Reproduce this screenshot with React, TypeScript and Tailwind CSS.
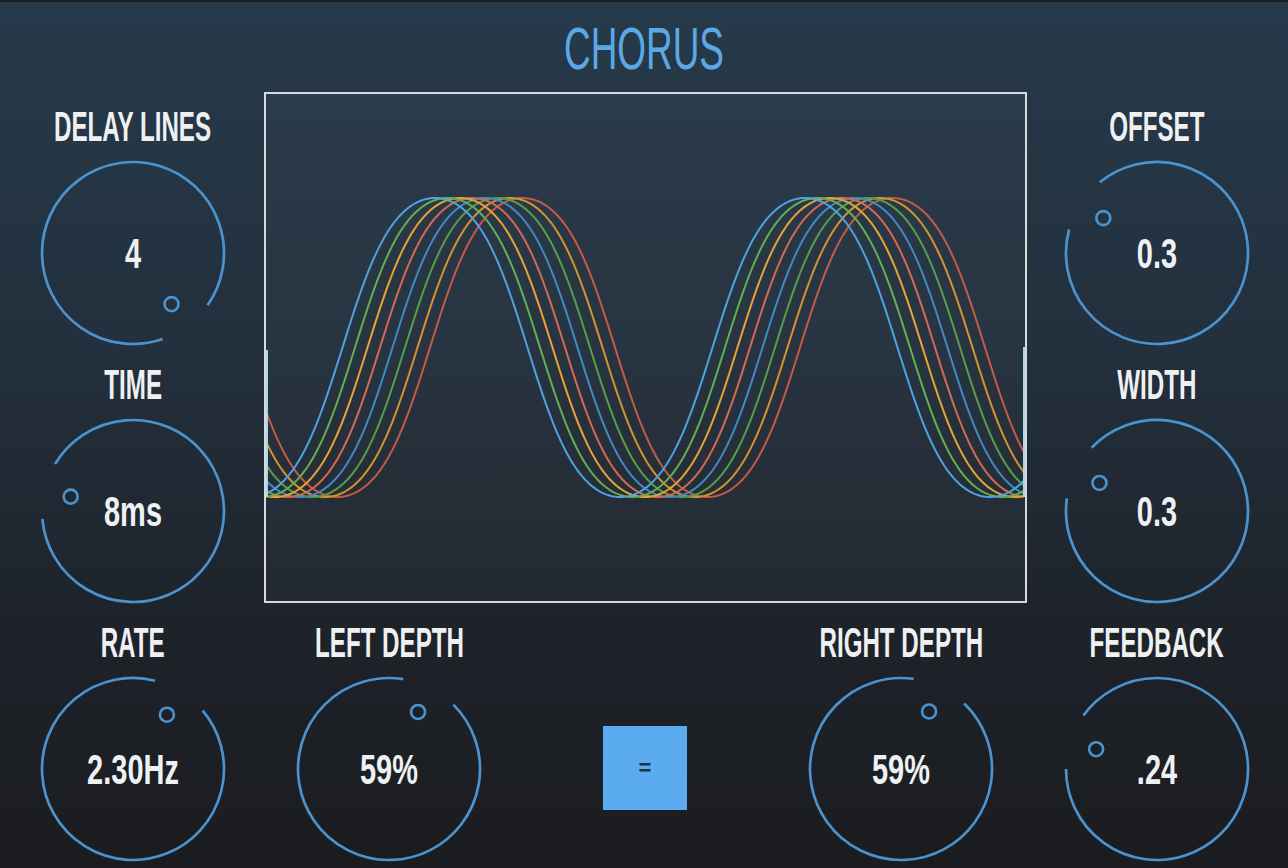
import React from 'react';

const FONT = "font-['Liberation_Sans',Arial,sans-serif]";

const WAVE_COLORS = ['#4da3e0', '#62b054', '#e6a436', '#d46a55', '#3f8ac4', '#54a04a', '#d39430', '#c65a48'];

// angle in degrees, clockwise from 12 o'clock
const pt = (cx: number, cy: number, r: number, a: number) => [
  cx + r * Math.sin((a * Math.PI) / 180),
  cy - r * Math.cos((a * Math.PI) / 180),
];

function arcPath(cx: number, cy: number, r: number, a0: number, a1: number) {
  const [x0, y0] = pt(cx, cy, r, a0);
  const [x1, y1] = pt(cx, cy, r, a1);
  const large = a1 - a0 > 180 ? 1 : 0;
  return `M${x0.toFixed(2)} ${y0.toFixed(2)} A${r} ${r} 0 ${large} 1 ${x1.toFixed(2)} ${y1.toFixed(2)}`;
}

function wavePath(i: number) {
  const W = 759;
  const mid = 253.5;
  const amp = 149.5;
  const k = 0.9;
  const norm = Math.tanh(k);
  const offset = i * 12.5;
  let d = '';
  for (let x = 0; x <= W; x += 2) {
    const px = 266 + x;
    const c = Math.cos((2 * Math.PI * (px - 435 - offset)) / 370);
    const y = mid - (amp * Math.tanh(k * c)) / norm;
    d += `${x === 0 ? 'M' : 'L'}${x} ${y.toFixed(2)} `;
  }
  return d;
}

interface KnobProps {
  label: string;
  value: string;
  angle: number;
  cell: string;
}

const Knob: React.FC<KnobProps> = ({ label, value, angle, cell }) => {
  const gap = 18;
  return (
    <div className={`flex flex-col items-center ${cell}`}>
      <div className="h-[67px] pt-[14px] flex justify-center">
        <span className={`inline-block whitespace-nowrap text-[42px] font-bold leading-none text-[#eef0f2] scale-x-[0.575] ${FONT}`}>
          {label}
        </span>
      </div>
      <svg width="188" height="188" viewBox="0 0 188 188">
        <path d={arcPath(94, 94, 91, angle + gap, angle + 360 - gap)} fill="none" stroke="#4b93cf" strokeWidth="2.7" />
        <circle cx={pt(94, 94, 64, angle)[0]} cy={pt(94, 94, 64, angle)[1]} r="7" fill="none" stroke="#4b93cf" strokeWidth="2.6" />
        <text
          x="0"
          y="15"
          transform="translate(94 94) scale(0.69 1)"
          textAnchor="middle"
          fontSize="42"
          fontWeight="700"
          fill="#eef1f3"
          className={FONT}
        >
          {value}
        </text>
      </svg>
    </div>
  );
};

const Scope: React.FC = () => (
  <div className="col-start-2 col-span-3 row-start-1 row-span-2 ml-[3px] mr-[2px] mb-[5px] border-2 border-[#d6dadd] bg-white/[0.025] overflow-hidden">
    <svg className="block" width="759" height="507" viewBox="0 0 759 507">
      {[7, 6, 5, 4, 3, 2, 1, 0].map((i) => (
        <path key={i} d={wavePath(i)} fill="none" stroke={WAVE_COLORS[i]} strokeWidth="2" />
      ))}
      <line x1="1" y1="256" x2="1" y2="403" stroke="#a6d8e6" strokeWidth="2" />
      <line x1="758" y1="253" x2="758" y2="403" stroke="#a6d8e6" strokeWidth="2" />
    </svg>
  </div>
);

export default function App() {
  return (
    <div className="w-[1288px] h-[868px] overflow-hidden border-t-2 border-[#1a1e22] bg-[linear-gradient(180deg,#263a4b_0%,#23303d_40%,#1e232a_72%,#1b1c1f_100%)]">
      <div className="h-[90px] pt-[17px] flex justify-center">
        <span className={`inline-block text-[60px] leading-none text-[#5aa9e6] scale-x-[0.615] ${FONT}`}>CHORUS</span>
      </div>

      <div className="grid grid-cols-[repeat(5,256px)] grid-rows-[repeat(3,258px)] pl-[5px]">
        <Knob cell="col-start-1 row-start-1" label="DELAY LINES" value="4" angle={143} />
        <Scope />
        <Knob cell="col-start-5 row-start-1" label="OFFSET" value="0.3" angle={-57} />

        <Knob cell="col-start-1 row-start-2" label="TIME" value="8ms" angle={-77} />
        <Knob cell="col-start-5 row-start-2" label="WIDTH" value="0.3" angle={-64} />

        <Knob cell="col-start-1 row-start-3" label="RATE" value="2.30Hz" angle={32} />
        <Knob cell="col-start-2 row-start-3" label="LEFT DEPTH" value="59%" angle={27} />
        <div className="col-start-3 row-start-3 flex justify-center pt-[118px]">
          <button className="w-[84px] h-[84px] bg-[#5aabf0] flex items-center justify-center text-[22px] font-bold leading-none text-[#1a3346] font-['Liberation_Sans',sans-serif]">
            =
          </button>
        </div>
        <Knob cell="col-start-4 row-start-3" label="RIGHT DEPTH" value="59%" angle={26} />
        <Knob cell="col-start-5 row-start-3" label="FEEDBACK" value=".24" angle={-72} />
      </div>
    </div>
  );
}
